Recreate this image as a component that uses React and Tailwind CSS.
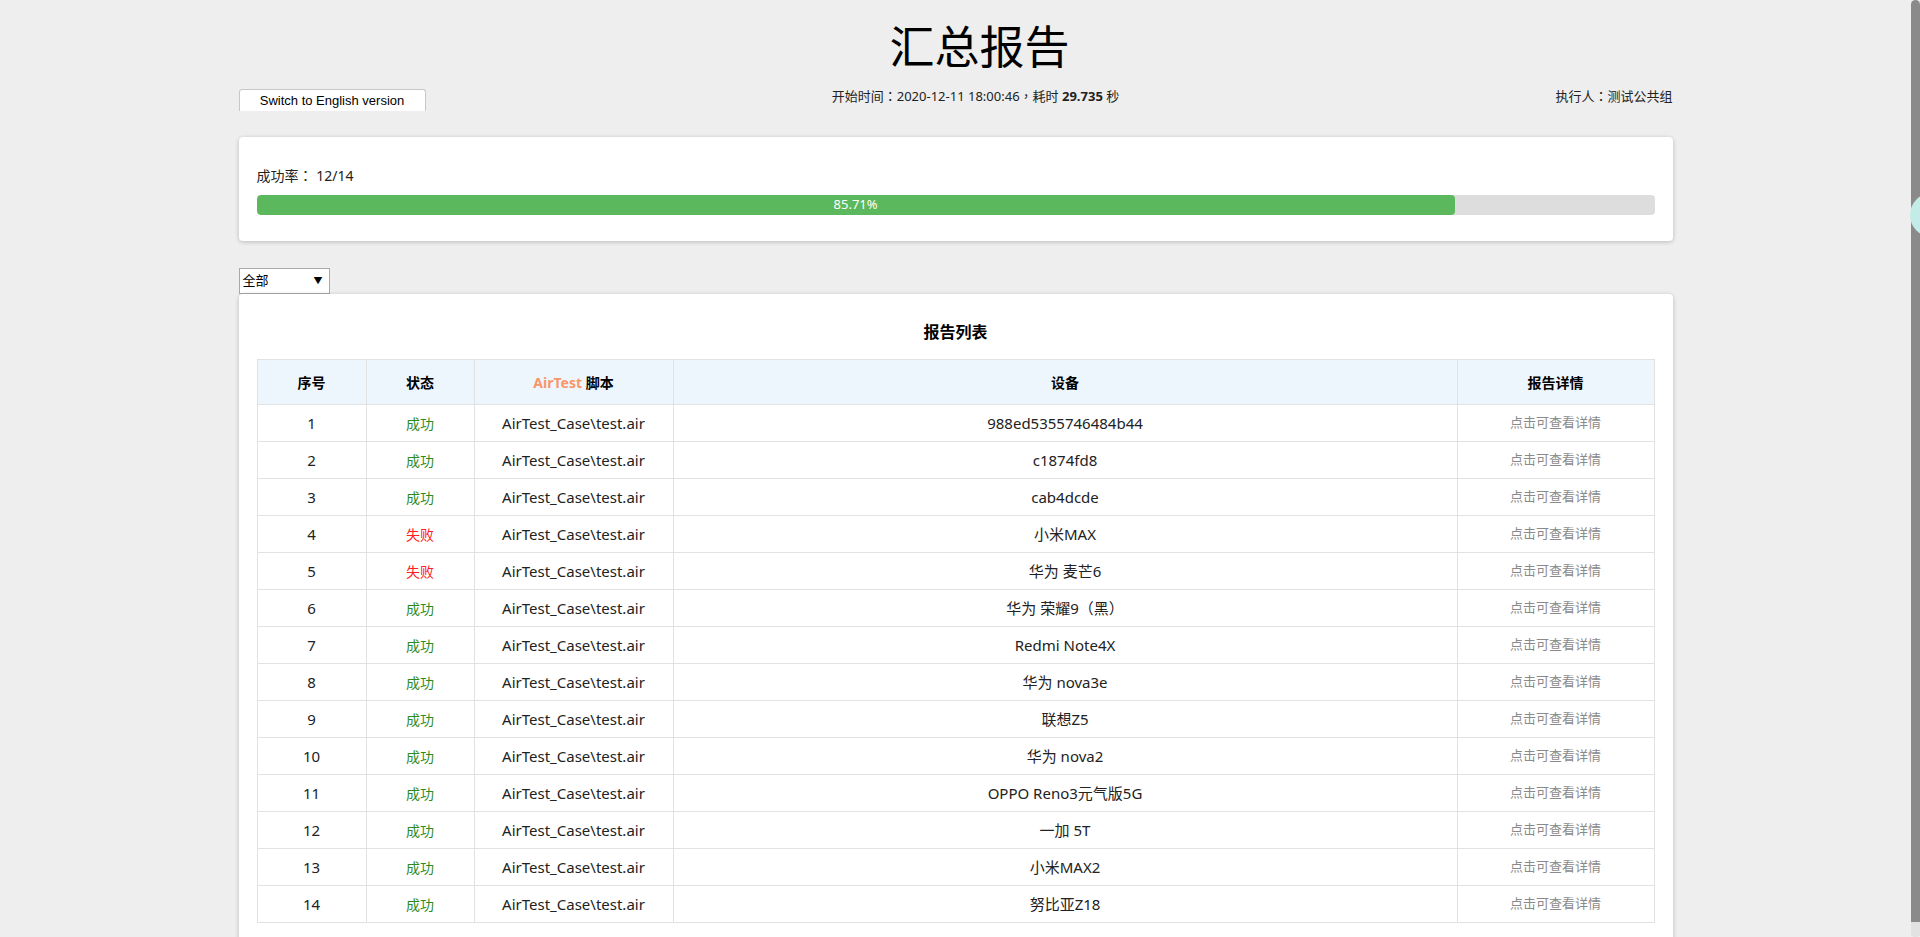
import React from 'react';

const rows = [
  { id: 1, ok: true, device: '988ed5355746484b44' },
  { id: 2, ok: true, device: 'c1874fd8' },
  { id: 3, ok: true, device: 'cab4dcde' },
  { id: 4, ok: false, device: '小米MAX' },
  { id: 5, ok: false, device: '华为 麦芒6' },
  { id: 6, ok: true, device: '华为 荣耀9（黑）' },
  { id: 7, ok: true, device: 'Redmi Note4X' },
  { id: 8, ok: true, device: '华为 nova3e' },
  { id: 9, ok: true, device: '联想Z5' },
  { id: 10, ok: true, device: '华为 nova2' },
  { id: 11, ok: true, device: 'OPPO Reno3元气版5G' },
  { id: 12, ok: true, device: '一加 5T' },
  { id: 13, ok: true, device: '小米MAX2' },
  { id: 14, ok: true, device: '努比亚Z18' },
];

const passed = rows.filter(r => r.ok).length;
const rate = ((passed / rows.length) * 100).toFixed(2);

// centred full-width punctuation, like the original font draws it
const P = ({ children }) => (
  <span className="font-[family-name:'Noto_Sans_CJK_TC',sans-serif]">{children}</span>
);

function App() {
  return (
    <div className="flex h-[937px] w-full overflow-hidden bg-[#eeeeee] text-[#222] font-[family-name:'Noto_Sans','Noto_Sans_CJK_SC',sans-serif]">
      <div className="min-w-0 flex-1">
        <div className="mx-auto w-[1434px] pt-[19px]">
          <h1 className="h-[56px] pl-[48px] text-center text-[45px] leading-[56px] font-normal text-black">汇总报告</h1>

          <div className="mt-[14px] flex items-start text-[13px] leading-[14px]">
            <div className="flex h-[22px] w-[187px] shrink-0 items-center justify-center rounded-t-[3px] border border-b-0 border-[#c8c8c8] bg-white font-[family-name:'Liberation_Sans',sans-serif] text-[13px] text-black">
              Switch to English version
            </div>
            <div className="flex-1 pr-[30px] text-center">
              开始时间<P>：</P>2020-12-11 18:00:46<P>，</P>耗时 <b>29.735</b> 秒
            </div>
            <div className="shrink-0 text-right whitespace-nowrap">执行人<P>：</P>测试公共组</div>
          </div>

          <div className="mt-[26px] rounded-[4px] bg-white px-[18px] pt-[28px] pb-[26px] shadow-[0_1px_4px_rgba(0,0,0,0.22)]">
            <div className="text-[14px] leading-[20px]">成功率<P>：</P> {passed}/{rows.length}</div>
            <div className="mt-[9px] h-[20px] overflow-hidden rounded-[4px] bg-[#dddddd]">
              <div
                className="flex h-full items-center justify-center rounded-[4px] bg-[#5cb85c] text-[13px] text-white"
                style={{ width: `${rate}%` }}
              >
                {rate}%
              </div>
            </div>
          </div>

          <div className="mt-[27px] flex h-[26px] w-[91px] items-center justify-between border border-[#a9a9a9] bg-white pl-[3px] pr-[6px] text-[13px] text-black">
            <span>全部</span>
            <span className="text-[9px]">▼</span>
          </div>

          <div className="rounded-[4px] bg-white px-[18px] pt-[26px] pb-[30px] shadow-[0_1px_4px_rgba(0,0,0,0.22)]">
            <h2 className="mb-[15px] text-center text-[16px] leading-[24px] font-bold text-black">报告列表</h2>
            <table className="w-full table-fixed border-collapse text-center">
              <colgroup>
                <col className="w-[109px]" />
                <col className="w-[108px]" />
                <col className="w-[199px]" />
                <col />
                <col className="w-[197px]" />
              </colgroup>
              <thead>
                <tr className="h-[45px] bg-[#eef6fd] text-[14px] font-bold text-black">
                  <th className="border border-[#e2e2e2]">序号</th>
                  <th className="border border-[#e2e2e2]">状态</th>
                  <th className="border border-[#e2e2e2]">
                    <span className="text-[#f8966a]">AirTest</span> 脚本
                  </th>
                  <th className="border border-[#e2e2e2]">设备</th>
                  <th className="border border-[#e2e2e2]">报告详情</th>
                </tr>
              </thead>
              <tbody>
                {rows.map(r => (
                  <tr key={r.id} className="h-[37px] text-[15px]">
                    <td className="border border-[#e2e2e2]">{r.id}</td>
                    <td className={`border border-[#e2e2e2] text-[14px] ${r.ok ? 'text-[#2e8b1e]' : 'text-[#ff2020]'}`}>
                      {r.ok ? '成功' : '失败'}
                    </td>
                    <td className="border border-[#e2e2e2]">AirTest_Case\test.air</td>
                    <td className="border border-[#e2e2e2]">{r.device}</td>
                    <td className="border border-[#e2e2e2] text-[13px] text-[#8a8a8a]">点击可查看详情</td>
                  </tr>
                ))}
              </tbody>
            </table>
          </div>
        </div>
      </div>

      {/* scrollbar strip */}
      <div className="relative flex w-[9px] shrink-0 flex-col">
        <div className="h-[922px] rounded-t-[5px] bg-[#8a8a8a]" />
        <div className="flex-1 rounded-b-[4px] bg-[#e2e2e2]" />
        <div className="absolute top-[193px] left-[-1px] h-[44px] w-[44px] rounded-full bg-[#c3ece8]" />
      </div>
    </div>
  );
}

export default App;
